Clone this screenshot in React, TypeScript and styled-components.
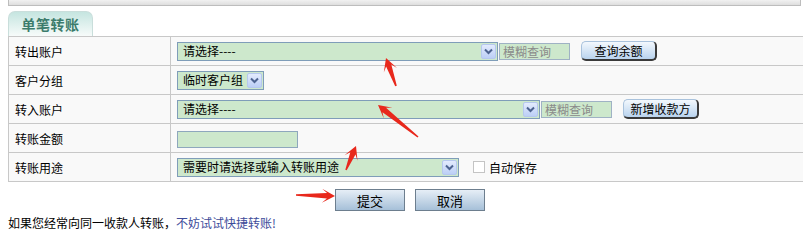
import React from "react";
import styled, { createGlobalStyle } from "styled-components";

const Global = createGlobalStyle`
  html, body {
    margin: 0;
    padding: 0;
    background: #fff;
    overflow: hidden;
  }
  body {
    font-family: "Noto Sans CJK SC", "Liberation Sans", sans-serif;
    font-size: 12px;
    color: #000;
  }
`;

const Page = styled.div`
  position: relative;
  width: 803px;
  height: 241px;
  padding-left: 8px;
  box-sizing: border-box;
`;

const TopStrip = styled.div`
  width: 793px;
  height: 6px;
  box-sizing: border-box;
  background: linear-gradient(#f1f1f1, #dedede);
  border: 1px solid #bdbdbd;
  border-top: none;
`;

const TabBar = styled.div`
  margin-top: 5px;
  display: flex;
`;

const Tab = styled.div`
  width: 85px;
  height: 25px;
  box-sizing: border-box;
  border: 1px solid #c9dedb;
  border-bottom: none;
  border-radius: 7px 7px 0 0;
  background: linear-gradient(#c5e5e0, #f7fbfa);
  color: #3c7c6c;
  font-weight: bold;
  font-size: 14px;
  display: flex;
  align-items: center;
  justify-content: center;
  letter-spacing: 0.5px;
`;

const Table = styled.div`
  display: grid;
  grid-template-columns: 162px 1fr;
  width: 800px;
  border-top: 1px solid #c8c8c8;
  border-left: 1px solid #c8c8c8;
`;

const LabelCell = styled.div`
  height: 28px;
  border-bottom: 1px solid #c8c8c8;
  border-right: 1px solid #c8c8c8;
  background: #f9f9f9;
  display: flex;
  align-items: center;
  padding-left: 6px;
`;

const ValueCell = styled.div`
  height: 28px;
  border-bottom: 1px solid #c8c8c8;
  background: #f9f9f9;
  display: flex;
  align-items: center;
  padding-left: 6px;
`;

const SelectBox = styled.div<{ $w: number }>`
  width: ${(p) => p.$w}px;
  height: 19px;
  box-sizing: border-box;
  border: 1px solid #7f9db9;
  background: #cde8cc;
  display: flex;
  align-items: center;
  justify-content: space-between;
  padding: 1px 1px 1px 5px;
  line-height: 1;
`;

const ArrowBtn = styled.div`
  width: 15px;
  height: 15px;
  box-sizing: border-box;
  border: 1px solid #b6c8ee;
  border-radius: 2px;
  background: linear-gradient(#e3ebfd, #bccff6);
  display: flex;
  align-items: center;
  justify-content: center;
`;

const Fuzzy = styled.div<{ $w: number }>`
  width: ${(p) => p.$w}px;
  height: 17px;
  box-sizing: border-box;
  border: 1px solid #9fb2c4;
  background: #cde8cc;
  color: #8a8a8a;
  padding-left: 3px;
  display: flex;
  align-items: center;
  margin-left: 1px;
`;

const AmountInput = styled.div`
  width: 121px;
  height: 17px;
  box-sizing: border-box;
  border: 1px solid #8ea7bd;
  background: #cde8cc;
  margin-top: 2px;
`;

const RoundButton = styled.div<{ $w: number }>`
  width: ${(p) => p.$w}px;
  height: 20px;
  box-sizing: border-box;
  margin-left: 11px;
  border-radius: 5px;
  border: 1px solid #a9c2dc;
  border-right: 2px solid #3a3a3a;
  border-bottom: 2px solid #3a3a3a;
  background: linear-gradient(#f3f8fd, #b9d3ee);
  display: flex;
  align-items: center;
  justify-content: center;
`;

const Check = styled.div`
  width: 12px;
  height: 12px;
  box-sizing: border-box;
  border: 1px solid #c4c4c4;
  background: #fff;
  margin-left: 14px;
  margin-right: 4px;
`;

const Actions = styled.div`
  display: flex;
  gap: 10px;
  padding-left: 327px;
  margin-top: 7px;
`;

const ActionButton = styled.div`
  width: 70px;
  height: 22px;
  box-sizing: border-box;
  border: 1px solid #6d7e8e;
  background: linear-gradient(#e6eef6, #a6c0d8);
  display: flex;
  align-items: center;
  justify-content: center;
  font-size: 13px;
`;

const Tip = styled.p`
  margin: 4px 0 0;
  line-height: 16px;
`;

const TipLink = styled.a`
  color: #3d4b99;
  text-decoration: none;
`;

const Overlay = styled.svg`
  position: absolute;
  left: 0;
  top: 0;
  pointer-events: none;
`;

const Chevron = () => (
  <svg width="9" height="7" viewBox="0 0 9 7">
    <polyline points="1,1.5 4.5,5 8,1.5" fill="none" stroke="#4d6390" strokeWidth="2" />
  </svg>
);

const Select = ({ w, text }: { w: number; text: string }) => (
  <SelectBox $w={w}>
    <span>{text}</span>
    <ArrowBtn>
      <Chevron />
    </ArrowBtn>
  </SelectBox>
);

type Pt = [number, number];

// tapered red arrow: thin tail, wider shaft near the barbed head
const arrowPoints = (tail: Pt, tip: Pt, head = 12, wing = 7) => {
  const dx = tip[0] - tail[0];
  const dy = tip[1] - tail[1];
  const len = Math.hypot(dx, dy);
  const ux = dx / len;
  const uy = dy / len;
  const nx = -uy;
  const ny = ux;
  const at = (d: number, o: number): string =>
    `${(tip[0] - ux * d + nx * o).toFixed(1)},${(tip[1] - uy * d + ny * o).toFixed(1)}`;
  return [
    at(len, 0.8),
    at(head - 4, 2.8),
    at(head + 1, wing),
    at(0, 0),
    at(head + 1, -wing),
    at(head - 4, -2.8),
    at(len, -0.8),
  ].join(" ");
};

const arrows: [Pt, Pt][] = [
  [[396, 86], [386, 58]],
  [[418, 137], [378, 105]],
  [[346, 170], [356, 146]],
  [[296, 195], [335, 196]],
];

export default function App() {
  return (
    <>
      <Global />
      <Page>
        <TopStrip />
        <TabBar>
          <Tab>单笔转账</Tab>
        </TabBar>
        <Table>
          <LabelCell>转出账户</LabelCell>
          <ValueCell>
            <Select w={321} text="请选择----" />
            <Fuzzy $w={71}>模糊查询</Fuzzy>
            <RoundButton $w={76}>查询余额</RoundButton>
          </ValueCell>

          <LabelCell>客户分组</LabelCell>
          <ValueCell>
            <Select w={87} text="临时客户组" />
          </ValueCell>

          <LabelCell>转入账户</LabelCell>
          <ValueCell>
            <Select w={363} text="请选择----" />
            <Fuzzy $w={71}>模糊查询</Fuzzy>
            <RoundButton $w={76}>新增收款方</RoundButton>
          </ValueCell>

          <LabelCell>转账金额</LabelCell>
          <ValueCell>
            <AmountInput />
          </ValueCell>

          <LabelCell>转账用途</LabelCell>
          <ValueCell>
            <Select w={282} text="需要时请选择或输入转账用途" />
            <Check />
            <span>自动保存</span>
          </ValueCell>
        </Table>

        <Actions>
          <ActionButton>提交</ActionButton>
          <ActionButton>取消</ActionButton>
        </Actions>

        <Tip>
          如果您经常向同一收款人转账，<TipLink href="#">不妨试试快捷转账!</TipLink>
        </Tip>

        <Overlay width="803" height="241" viewBox="0 0 803 241">
          {arrows.map(([tail, tip], i) => (
            <polygon key={i} points={arrowPoints(tail, tip)} fill="#e8281c" />
          ))}
        </Overlay>
      </Page>
    </>
  );
}
